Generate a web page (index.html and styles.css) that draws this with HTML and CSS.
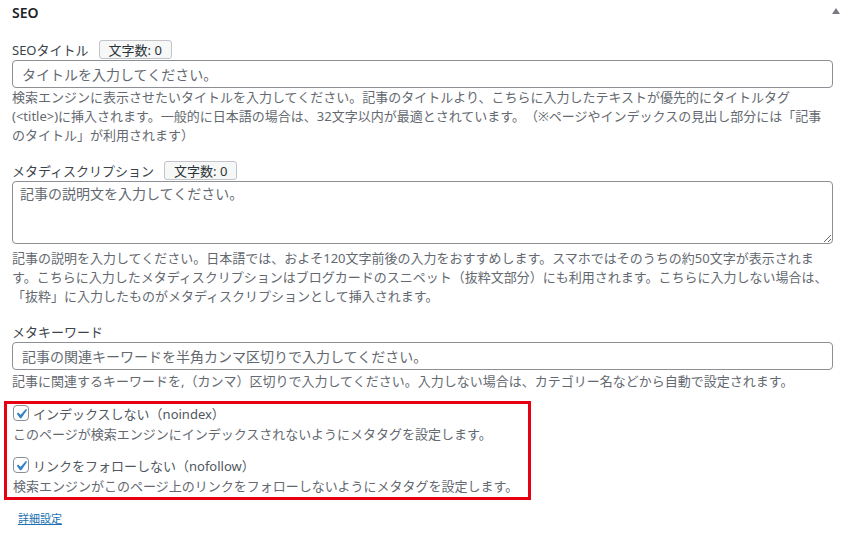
FILE: index.html
```html
<!DOCTYPE html>
<html lang="ja">

<head>
  <meta charset="UTF-8" />
  <meta name="viewport" content="width=device-width, initial-scale=1.0" />
  <title>SEO</title>
  <link rel="stylesheet" href="styles.css">
</head>

<body>
  <div class="postbox">
    <div class="postbox_header">
      <h2 class="postbox_title">SEO</h2>
      <span class="toggle_arrow"></span>
    </div>

    <div class="postbox_inside">
      <div class="field_label">
        <label for="seoTitle">SEOタイトル</label>
        <span class="count_badge">文字数: 0</span>
      </div>
      <input class="input_field" type="text" id="seoTitle" placeholder="タイトルを入力してください。" />
      <p class="description">検索エンジンに表示させたいタイトルを入力してください。記事のタイトルより、こちらに入力したテキストが優先的にタイトルタグ(&lt;title&gt;)に挿入されます。一般的に日本語の場合は、32文字以内が最適とされています。（※ページやインデックスの見出し部分には「記事のタイトル」が利用されます）</p>

      <div class="field_label">
        <label for="metaDescription">メタディスクリプション</label>
        <span class="count_badge">文字数: 0</span>
      </div>
      <textarea class="textarea_field" id="metaDescription" placeholder="記事の説明文を入力してください。"></textarea>
      <p class="description description_after_area">記事の説明を入力してください。日本語では、およそ120文字前後の入力をおすすめします。スマホではそのうちの約50文字が表示されます。こちらに入力したメタディスクリプションはブログカードのスニペット（抜粋文部分）にも利用されます。こちらに入力しない場合は、「抜粋」に入力したものがメタディスクリプションとして挿入されます。</p>

      <div class="field_label">
        <label for="metaKeywords">メタキーワード</label>
      </div>
      <input class="input_field" type="text" id="metaKeywords" placeholder="記事の関連キーワードを半角カンマ区切りで入力してください。" />
      <p class="description description_short">記事に関連するキーワードを,（カンマ）区切りで入力してください。入力しない場合は、カテゴリー名などから自動で設定されます。</p>

      <div class="highlight_box">
        <label class="check_row">
          <span class="check_box">
            <svg viewBox="0 0 20 20" width="20" height="20">
              <path d="M14.83 4.89l1.34.94-5.81 8.38H9.02L5.78 9.67l1.34-1.25 2.57 2.4z" fill="#3582c4" />
            </svg>
          </span>
          インデックスしない（noindex）
        </label>
        <p class="description check_desc">このページが検索エンジンにインデックスされないようにメタタグを設定します。</p>

        <label class="check_row check_row_second">
          <span class="check_box">
            <svg viewBox="0 0 20 20" width="20" height="20">
              <path d="M14.83 4.89l1.34.94-5.81 8.38H9.02L5.78 9.67l1.34-1.25 2.57 2.4z" fill="#3582c4" />
            </svg>
          </span>
          リンクをフォローしない（nofollow）
        </label>
        <p class="description check_desc">検索エンジンがこのページ上のリンクをフォローしないようにメタタグを設定します。</p>
      </div>

      <a class="detail_link" href="#">詳細設定</a>
    </div>
  </div>
</body>

</html>
```

FILE: styles.css
```css
body {
  font-family: "Noto Sans", "Noto Sans CJK JP", sans-serif;
  margin: 0;
  background: #fff;
  color: #3c434a;
  text-spacing-trim: space-all;
}

.postbox_header {
  display: flex;
  justify-content: space-between;
  align-items: center;
  height: 24px;
  padding: 0 12px;
}

.postbox_title {
  margin: 0;
  font-size: 14px;
  font-weight: 600;
  color: #1d2327;
}

.toggle_arrow {
  width: 0;
  height: 0;
  border-left: 4px solid transparent;
  border-right: 4px solid transparent;
  border-bottom: 6px solid #787c82;
  margin-top: -2px;
}

.postbox_inside {
  padding: 0 19px 0 12px;
  display: flex;
  flex-direction: column;
}

.field_label {
  display: flex;
  align-items: center;
  gap: 10px;
  height: 20px;
  margin-top: 15px;
  font-size: 13px;
  color: #3c434a;
}

.count_badge {
  display: inline-flex;
  align-items: center;
  height: 17px;
  padding: 0 9px;
  border: 1px solid #c3c4c7;
  border-radius: 3px;
  background: #f6f7f7;
  color: #2c3338;
  font-size: 13px;
}

.input_field,
.textarea_field {
  box-sizing: border-box;
  width: 100%;
  margin: 0;
  border: 1px solid #8c8f94;
  border-radius: 4px;
  background: #fff;
  font-family: "Noto Sans", "Noto Sans CJK JP", sans-serif;
  font-size: 14px;
  color: #2c3338;
  outline: none;
}

.input_field {
  height: 28px;
  margin-top: 1px;
  padding: 0 9px;
}

.textarea_field {
  display: block;
  height: 63px;
  margin-top: 1px;
  padding: 1px 7px;
  resize: vertical;
}

.input_field::placeholder,
.textarea_field::placeholder {
  color: #646970;
}

.description {
  margin: 0;
  font-size: 13px;
  line-height: 19px;
  color: #646970;
}

.description_after_area {
  margin-top: 5px;
}

.description_short {
  margin-top: 2px;
}

.highlight_box {
  box-sizing: border-box;
  width: 527px;
  margin: 10px 0 0 -8px;
  padding: 0 6px 1px 6px;
  border: 3px solid #e60012;
  display: flex;
  flex-direction: column;
}

.check_row {
  display: flex;
  align-items: center;
  gap: 4px;
  height: 18px;
  font-size: 13px;
  color: #50575e;
}

.check_row_second {
  margin-top: 12px;
}

.check_box {
  box-sizing: border-box;
  width: 16px;
  height: 16px;
  border: 1px solid #8c8f94;
  border-radius: 4px;
  background: #fff;
  display: flex;
  align-items: center;
  justify-content: center;
  overflow: hidden;
}

.check_box svg {
  flex: none;
  margin-top: 1px;
}

.check_desc {
  margin-top: 3px;
}

.detail_link {
  align-self: flex-start;
  margin: 11px 0 0 6px;
  font-size: 11px;
  line-height: 15px;
  color: #2271b1;
}
```
